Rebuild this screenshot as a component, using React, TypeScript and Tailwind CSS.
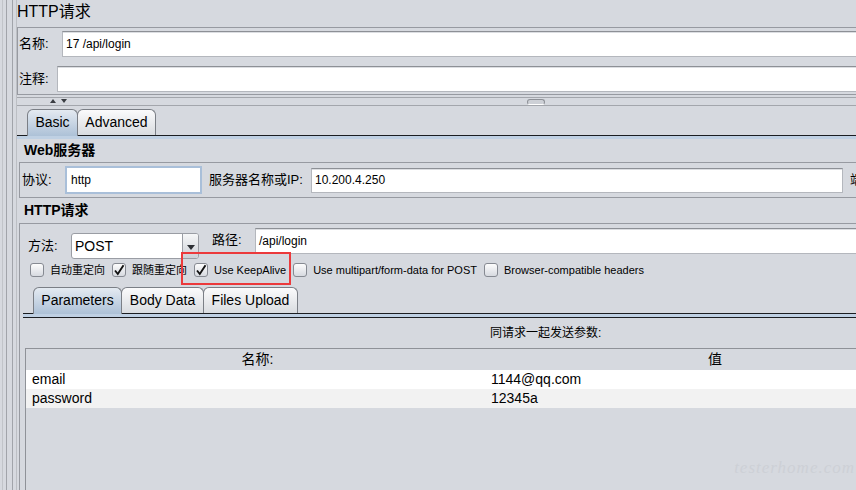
import React from "react";

// JMeter "HTTP请求" sampler panel (Nimbus look)

function Field({ text, className }: { text?: string; className: string }) {
  return (
    <div
      className={`border border-[#b4b7bd] border-t-[#8d9096] bg-white pl-[3px] text-[12px] shadow-[inset_0_1px_0_#dcdee2] flex items-center ${className}`}
    >
      {text}
    </div>
  );
}

function Check({ checked }: { checked?: boolean }) {
  return (
    <span className="flex h-[14px] w-[14px] shrink-0 items-center justify-center rounded-[3px] border border-[#868a92] bg-linear-to-b from-[#fdfdfd] to-[#d7dae0]">
      {checked && (
        <svg width="12" height="12" viewBox="0 0 12 12">
          <path d="M2 6.5 L4.8 10 L10.5 1.2" fill="none" stroke="#111" strokeWidth="1.9" />
        </svg>
      )}
    </span>
  );
}

function Tab({ label, selected, w }: { label: string; selected?: boolean; w: string }) {
  return (
    <div
      className={`${w} -ml-px flex items-center justify-center rounded-t-[6px] border border-b-0 border-[#7b7f86] text-[14px] first:ml-0 ${
        selected
          ? "relative -mb-px h-[27px] bg-linear-to-b from-[#e4eaf1] to-[#adc1d7] pb-px"
          : "h-[26px] bg-linear-to-b from-[#fbfbfc] to-[#d9dce0]"
      }`}
    >
      {label}
    </div>
  );
}

function LeftEdge() {
  return (
    <div className="flex h-full w-[17px] shrink-0">
      <div className="ml-[2px] w-px bg-[#c1c4c9]" />
      <div className="ml-[3px] w-px bg-[#a1a4aa]" />
      <div className="ml-[5px] w-px bg-[#a1a4aa]" />
      <div className="ml-[3px] w-px bg-[#bcbfc4]" />
    </div>
  );
}

const options = [
  { label: "自动重定向", checked: false },
  { label: "跟随重定向", checked: true },
  { label: "Use KeepAlive", checked: true, marked: true },
  { label: "Use multipart/form-data for POST", checked: false },
  { label: "Browser-compatible headers", checked: false },
];

const params = [
  { name: "email", value: "1144@qq.com" },
  { name: "password", value: "12345a" },
];

export default function App() {
  return (
    <div className="relative flex h-[490px] w-[856px] overflow-hidden bg-[#d6d9df] font-['Liberation_Sans','Noto_Sans_CJK_SC',sans-serif] text-black">
      <LeftEdge />

      <div className="flex min-w-0 flex-1 flex-col">
        {/* Title */}
        <div className="h-[27px] shrink-0 pt-[2px] text-[16px] leading-[20px]">HTTP请求</div>

        {/* Name / comment */}
        <div className="-mr-[20px] h-[68px] shrink-0 border border-[#979aa1] pt-[3px]">
          <div className="flex items-center">
            <span className="w-[44px] shrink-0 whitespace-nowrap pl-[1px] text-[13px]">名称:</span>
            <Field text="17 /api/login" className="h-[26px] flex-1" />
          </div>
          <div className="mt-[9px] flex items-center">
            <span className="w-[39px] shrink-0 whitespace-nowrap pl-[1px] text-[13px]">注释:</span>
            <Field className="h-[26px] flex-1" />
          </div>
        </div>

        {/* Splitter */}
        <div className="-mr-[20px] mt-[2px] flex h-[9px] shrink-0 items-start border-y border-[#a3a6ac]">
          <svg className="ml-[33px] mt-[1px]" width="17" height="5" viewBox="0 0 17 5">
            <path d="M0 4 L3 0 L6 4 Z" fill="#3a3d42" />
            <path d="M11 0 L17 0 L14 4 Z" fill="#3a3d42" />
          </svg>
          <div className="ml-[460px] mt-[1px] h-[6px] w-[18px] rounded-[3px] border border-[#8e9197] border-b-white bg-[#cdd0d6]" />
        </div>

        {/* Basic / Advanced */}
        <div className="-mr-[20px] mt-[3px] flex shrink-0 items-end border-b border-[#1b1d21] pl-[10px]">
          <Tab label="Basic" selected w="w-[51px]" />
          <Tab label="Advanced" w="w-[79px]" />
        </div>
        <div className="-mr-[20px] h-[3px] shrink-0 bg-[#bfd0e3]" />

        {/* Web服务器 */}
        <div className="h-[23px] shrink-0 pl-[7px] text-[14px] font-bold leading-[23px]">Web服务器</div>
        <div className="-mr-[40px] ml-[2px] flex h-[36px] shrink-0 items-center border border-[#979aa1]">
          <span className="w-[45px] shrink-0 whitespace-nowrap pl-[2px] text-[13px]">协议:</span>
          <div className="flex h-[28px] w-[137px] shrink-0 items-center border-2 border-[#a9bfd9] bg-white pl-[4px] text-[12px]">
            http
          </div>
          <span className="ml-[7px] w-[102px] shrink-0 whitespace-nowrap text-[13px]">服务器名称或IP:</span>
          <Field text="10.200.4.250" className="h-[25px] w-[532px] shrink-0" />
          <span className="ml-[7px] shrink-0 whitespace-nowrap text-[13px]">端口号:</span>
        </div>

        {/* HTTP请求 */}
        <div className="h-[25px] shrink-0 pl-[7px] text-[14px] font-bold leading-[25px]">HTTP请求</div>
        <div className="-mr-[40px] ml-[2px] flex min-h-0 flex-1 flex-col border border-b-0 border-[#979aa1]">
          <div className="flex items-start pl-[8px]">
            <span className="mt-[9px] h-[26px] w-[43px] shrink-0 whitespace-nowrap text-[13px] leading-[26px]">方法:</span>
            <div className="mt-[9px] flex h-[26px] w-[128px] shrink-0 rounded-[3px] border border-[#9a9da4] bg-white">
              <span className="flex-1 pl-[3px] text-[14px] leading-[24px]">POST</span>
              <span className="flex w-[16px] items-center justify-center rounded-r-[2px] border-l border-[#9a9da4] bg-linear-to-b from-[#f6f7f8] to-[#cdd1d7]">
                <svg width="8" height="5" viewBox="0 0 8 5" className="mt-[3px]">
                  <path d="M0 0 L8 0 L4 5 Z" fill="#2c2f34" />
                </svg>
              </span>
            </div>
            <span className="ml-[13px] mt-[4px] h-[26px] w-[43px] shrink-0 whitespace-nowrap text-[13px] leading-[24px]">路径:</span>
            <Field text="/api/login" className="mt-[4px] h-[26px] flex-1" />
          </div>

          <div className="mt-[4px] flex h-[14px] items-center pl-[10px] text-[11px]">
            {options.map((o, i) => (
              <span key={o.label} className={`relative flex shrink-0 items-center gap-[6px] ${i > 0 ? "ml-[7px]" : ""}`}>
                <Check checked={o.checked} />
                <span className="whitespace-nowrap leading-[14px]">{o.label}</span>
                {o.marked && (
                  <span className="absolute -bottom-[8px] -left-[13px] -right-[5px] -top-[11px] border-2 border-[#ec3a3c]" />
                )}
              </span>
            ))}
          </div>

          {/* Parameters / Body Data / Files Upload */}
          <div className="ml-[3px] mt-[10px] flex flex-1 flex-col">
            <div className="flex items-end border-b border-[#1b1d21] pl-[10px]">
              <Tab label="Parameters" selected w="w-[89px]" />
              <Tab label="Body Data" w="w-[83px]" />
              <Tab label="Files Upload" w="w-[95px]" />
            </div>
            <div className="h-[4px] border-b border-[#1b1d21] bg-[#bfd0e3]" />

            <div className="h-[30px] whitespace-nowrap pl-[467px] text-[12px] leading-[30px]">同请求一起发送参数:</div>

            <div className="ml-[2px] flex-1 border-l border-t border-[#8f9298]">
              <div className="flex h-[21px] text-[14px] leading-[21px]">
                <span className="w-[463px] shrink-0 text-center">名称:</span>
                <span className="w-[452px] shrink-0 text-center">值</span>
              </div>
              {params.map((p, i) => (
                <div
                  key={p.name}
                  className={`flex h-[19px] text-[14px] leading-[19px] ${i % 2 === 0 ? "bg-white" : "bg-[#f2f2f2]"}`}
                >
                  <span className="w-[463px] shrink-0 pl-[6px]">{p.name}</span>
                  <span className="shrink-0 pl-[2px]">{p.value}</span>
                </div>
              ))}
            </div>
          </div>
        </div>
      </div>

      {/* watermark */}
      <span className="absolute bottom-[10px] right-[1px] font-['Liberation_Serif',serif] text-[17px] italic tracking-[1px] text-[#cdd0d6]">
        testerhome.com
      </span>
    </div>
  );
}
